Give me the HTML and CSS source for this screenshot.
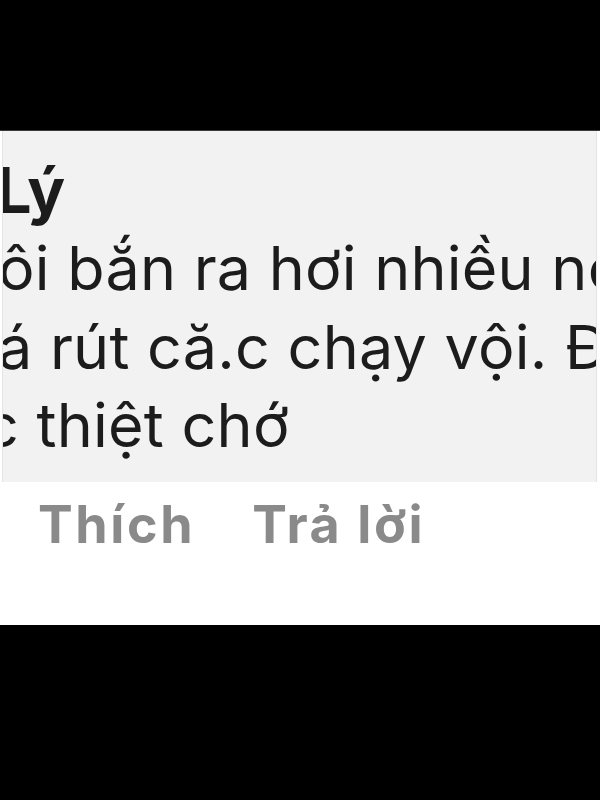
FILE: index.html
```html
<!DOCTYPE html>
<html lang="vi">
<head>
  <meta charset="UTF-8">
  <meta name="viewport" content="width=device-width, initial-scale=1.0">
  <title>Bình luận</title>
  <link rel="stylesheet" href="styles.css">
</head>
<body>
  <div class="frame">
    <div class="comment">
      <div class="bubble">
        <div class="author">Lý</div>
        <div class="text">
          <div class="line">ôi bắn ra hơi nhiều nếu</div>
          <div class="line">á rút că.c chạy vội. Đừng</div>
          <div class="line line-cut">c thiệt chớ</div>
        </div>
      </div>
      <div class="actions">
        <span class="action">Thích</span>
        <span class="action">Trả lời</span>
      </div>
    </div>
  </div>
</body>
</html>
```

FILE: styles.css
```css
body {
  margin: 0;
  background-color: #000;
  font-family: Inter, Roboto, "Liberation Sans", Arial, sans-serif;
}

.frame {
  width: 600px;
  height: 800px;
  padding-top: 130px;
  box-sizing: border-box;
  overflow: hidden;
}

.comment {
  background-color: #fff;
  height: 495px;
  border-top: 1px solid #3a3a3a;
  box-sizing: border-box;
}

.bubble {
  background-color: #f2f2f2;
  height: 351px;
  margin: 0 3px 0 2px;
  padding: 20px 0 0 0;
  box-sizing: border-box;
  overflow: hidden;
  color: #1c1c1c;
  border-left: 1px solid #e4e4e4;
  border-right: 1px solid #e4e4e4;
}

.author {
  font-size: 63px;
  font-weight: bold;
  line-height: 78px;
  white-space: nowrap;
  margin-left: -7px;
}

.text {
  font-size: 61px;
  line-height: 78.5px;
  letter-spacing: 0.25px;
  white-space: nowrap;
  margin-left: -5px;
}

.line-cut {
  margin-left: -14px;
}

.actions {
  display: flex;
  gap: 57px;
  padding: 16px 0 0 38px;
}

.action {
  font-size: 52px;
  font-weight: bold;
  line-height: 53px;
  letter-spacing: 2.6px;
  color: #8a8a8a;
}
```
